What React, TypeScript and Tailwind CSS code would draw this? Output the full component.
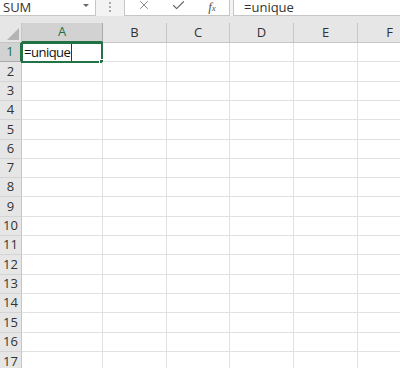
import React from "react";
import { X, Check } from "lucide-react";

const rowH: string[] = [
  "h-[19px]", "h-[20px]", "h-[19px]", "h-[19px]", "h-[20px]", "h-[19px]",
  "h-[19px]", "h-[19px]", "h-[20px]", "h-[19px]", "h-[19px]", "h-[20px]",
  "h-[19px]", "h-[19px]", "h-[20px]", "h-[19px]", "h-[20px]",
];

const cols = [
  { l: "A", w: "w-[81px]" },
  { l: "B", w: "w-[64px]" },
  { l: "C", w: "w-[63px]" },
  { l: "D", w: "w-[64px]" },
  { l: "E", w: "w-[64px]" },
  { l: "F", w: "w-[64px]" },
];

export default function App() {
  return (
    <div
      className="w-[400px] h-[368px] overflow-hidden bg-white text-[#222]"
      style={{ fontFamily: '"Open Sans", "Noto Sans", sans-serif' }}
    >
      {/* formula bar */}
      <div className="flex h-[16px] bg-[#f3f3f3]">
        <div className="w-[96px] shrink-0 bg-white border-r border-b border-[#c6c6c6] flex items-start justify-between pl-[3px] pr-[6px]">
          <span className="text-[13px] leading-[14px] text-[#333]">SUM</span>
          <span className="w-0 h-0 mt-[4px] border-l-[3px] border-r-[3px] border-t-[3px] border-l-transparent border-r-transparent border-t-[#666]" />
        </div>
        <div className="w-[28px] shrink-0 flex justify-center">
          <div className="flex flex-col gap-[2px] pt-[2px]">
            <span className="w-[2px] h-[2px] bg-[#aaa]" />
            <span className="w-[2px] h-[2px] bg-[#aaa]" />
            <span className="w-[2px] h-[2px] bg-[#aaa]" />
          </div>
        </div>
        <div className="w-[106px] shrink-0 bg-white border-l border-r border-b border-[#c6c6c6] flex items-start">
          <div className="w-[36px] flex justify-center pl-[2px]">
            <X size={14} strokeWidth={1.3} color="#666" className="-mt-[2px]" />
          </div>
          <div className="w-[34px] flex justify-center">
            <Check size={15} strokeWidth={1.8} color="#666" className="-mt-[2px]" />
          </div>
          <div className="w-[34px] flex justify-center">
            <span
              className="text-[13px] leading-[13px] italic text-[#555]"
              style={{ fontFamily: '"Liberation Serif", serif' }}
            >
              f<span className="text-[9px]">x</span>
            </span>
          </div>
        </div>
        <div className="w-[3px] shrink-0" />
        <div className="flex-1 bg-white border-l border-b border-[#c6c6c6] pl-[10px] flex items-start">
          <span className="text-[13px] leading-[14px] text-[#333]">=unique</span>
        </div>
      </div>
      {/* gap strip */}
      <div className="h-[7px] bg-[#e6e6e6]" />
      {/* column headers */}
      <div className="flex h-[20px] bg-[#e6e6e6]">
        <div className="w-[22px] shrink-0 border-r border-b border-[#c6c6c6] flex items-end justify-end pr-[2px] pb-[2px]">
          <svg width="12" height="12" viewBox="0 0 12 12">
            <polygon points="12,0 12,12 0,12" fill="#b4b4b4" />
          </svg>
        </div>
        {cols.map((c, i) => (
          <div
            key={c.l}
            className={`${c.w} shrink-0 flex items-center justify-center text-[13px] border-r ${
              i === 0
                ? "bg-[#d2d2d2] text-[#217346] border-b-2 border-b-[#217346] border-r-[#ababab]"
                : "text-[#333] border-b border-[#c6c6c6]"
            }`}
          >
            {c.l}
          </div>
        ))}
      </div>
      {/* rows */}
      {rowH.map((h, r) => (
        <div key={r} className={`flex ${h}`}>
          <div
            className={`w-[22px] shrink-0 flex items-center justify-center text-[13px] border-b ${
              r === 0
                ? "bg-[#d2d2d2] text-[#217346] border-r-2 border-r-[#217346] border-b-[#ababab]"
                : "bg-[#e6e6e6] text-[#333] border-r border-[#c6c6c6] border-b-[#d4d4d4]"
            }`}
          >
            {r + 1}
          </div>
          {cols.map((c, i) => (
            <div
              key={c.l}
              className={`${c.w} shrink-0 border-r border-b border-[#e1e1e1] relative`}
            >
              {r === 0 && i === 0 && (
                <div className="absolute -left-[1px] -top-[1px] w-[82px] h-[21px] border-2 border-[#217346] flex items-center pl-[1px]">
                  <span className="text-[13px] leading-none text-[#111] tracking-[-0.5px]">=unique</span>
                  <span className="w-[1px] h-[17px] bg-[#333] ml-[1px]" />
                  <span className="absolute -right-[3px] -bottom-[3px] w-[5px] h-[5px] bg-[#217346] border border-white" />
                </div>
              )}
            </div>
          ))}
        </div>
      ))}
    </div>
  );
}
